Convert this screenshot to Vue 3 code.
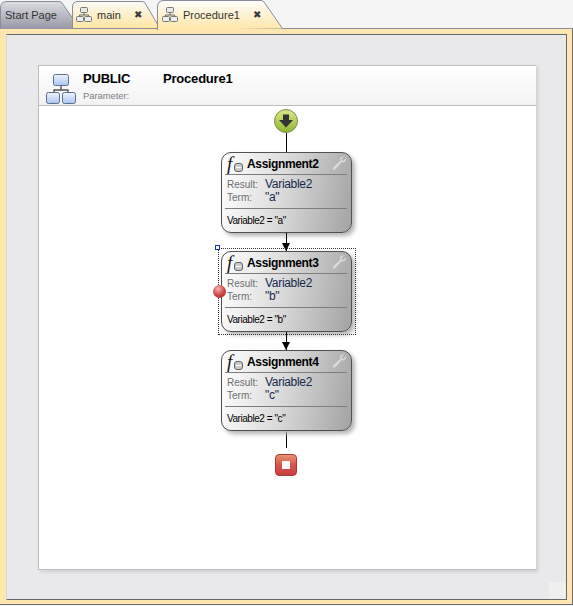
<script setup>
const cards = [
  { name: 'Assignment2', term: '"a"' },
  { name: 'Assignment3', term: '"b"', selected: true },
  { name: 'Assignment4', term: '"c"' },
]
</script>

<template>
  <div class="app">
    <div class="tabs">
      <div class="tab tab-start">
        <svg class="tab-bg" width="82" height="29" viewBox="0 0 82 29">
          <defs>
            <linearGradient id="gs" x1="0" y1="0" x2="0" y2="1">
              <stop offset="0" stop-color="#dcdce2" />
              <stop offset="1" stop-color="#9898a6" />
            </linearGradient>
          </defs>
          <path d="M0.5 29V8Q0.5 1.5 7 1.5H59Q61 1.5 62 3L80 28.5" fill="url(#gs)" stroke="#8a8d99" />
        </svg>
        <span class="tab-text">Start Page</span>
      </div>
      <div class="tab tab-main">
        <svg class="tab-bg" width="90" height="29" viewBox="0 0 90 29">
          <defs>
            <linearGradient id="gm" x1="0" y1="0" x2="0" y2="1">
              <stop offset="0" stop-color="#fbfaf5" />
              <stop offset="1" stop-color="#ffe5a0" />
            </linearGradient>
          </defs>
          <path d="M0.5 28.5V7Q0.5 1.5 6 1.5H70Q72 1.5 73 3L88 28.5Z" fill="url(#gm)" stroke="#8a8d99" />
        </svg>
        <svg class="net" width="16" height="15" viewBox="0 0 16 15">
          <rect x="4.5" y="0.5" width="7" height="5" rx="1" fill="#e8e8e8" stroke="#777" />
          <path d="M8 6V8M3.5 10V8H12.5V10" fill="none" stroke="#666" />
          <rect x="0.5" y="9.5" width="7" height="5" rx="1" fill="#eee" stroke="#777" />
          <rect x="8.5" y="9.5" width="7" height="5" rx="1" fill="#eee" stroke="#777" />
        </svg>
        <span class="tab-text tab-name">main</span>
        <span class="close">✖</span>
      </div>
      <div class="tab tab-proc">
        <svg class="tab-bg" width="126" height="30" viewBox="0 0 126 30">
          <defs>
            <linearGradient id="gp" x1="0" y1="0" x2="0" y2="1">
              <stop offset="0" stop-color="#fdfdfb" />
              <stop offset="1" stop-color="#ffe6a6" />
            </linearGradient>
          </defs>
          <path d="M0.5 30V7Q0.5 0.5 7 0.5H104Q106 0.5 107 2L125.5 28.5" fill="url(#gp)" stroke="#8a8d99" />
        </svg>
        <svg class="net" width="16" height="15" viewBox="0 0 16 15">
          <rect x="4.5" y="0.5" width="7" height="5" rx="1" fill="#e8e8e8" stroke="#777" />
          <path d="M8 6V8M3.5 10V8H12.5V10" fill="none" stroke="#666" />
          <rect x="0.5" y="9.5" width="7" height="5" rx="1" fill="#eee" stroke="#777" />
          <rect x="8.5" y="9.5" width="7" height="5" rx="1" fill="#eee" stroke="#777" />
        </svg>
        <span class="tab-text tab-name">Procedure1</span>
        <span class="close">✖</span>
      </div>
    </div>

    <div class="frame">
      <div class="inner">
        <div class="canvas">
          <div class="head">
            <svg class="head-icon" width="31" height="30" viewBox="0 0 31 30">
              <defs>
                <linearGradient id="gb" x1="0" y1="0" x2="0" y2="1">
                  <stop offset="0" stop-color="#eef4fd" />
                  <stop offset="1" stop-color="#a9c6f0" />
                </linearGradient>
              </defs>
              <rect x="7.5" y="0.5" width="15" height="11" rx="2" fill="url(#gb)" stroke="#5a6f8c" />
              <path d="M15 12V16M8 19V16H22V19" fill="none" stroke="#555" stroke-width="1.4" />
              <rect x="0.5" y="18.5" width="13" height="11" rx="2" fill="url(#gb)" stroke="#5a6f8c" />
              <rect x="16.5" y="18.5" width="13" height="11" rx="2" fill="url(#gb)" stroke="#5a6f8c" />
            </svg>
            <div class="head-text">
              <div class="head-title">
                <span class="scope">PUBLIC</span>
                <span>Procedure1</span>
              </div>
              <div class="param">Parameter:</div>
            </div>
          </div>

          <div class="flow">
            <svg class="flow-start" width="24" height="24" viewBox="0 0 24 24">
              <defs>
                <linearGradient id="gg" x1="0" y1="0" x2="0" y2="1">
                  <stop offset="0" stop-color="#dbe88a" />
                  <stop offset="1" stop-color="#8fb52e" />
                </linearGradient>
              </defs>
              <circle cx="12" cy="12" r="11.5" fill="url(#gg)" stroke="#7d8f50" />
              <path d="M9 5.5H15V11H19L12 18.5L5 11H9Z" fill="#333" />
            </svg>
            <div class="line first"></div>

            <template v-for="(c, i) in cards" :key="c.name">
              <div class="card">
                <div v-if="c.selected" class="selection"><span class="handle"></span></div>
                <span v-if="c.selected" class="breakpoint"></span>
                <div class="card-title">
                  <span class="fx">f</span>
                  <span class="fx-badge"><i></i></span>
                  <span class="card-name">{{ c.name }}</span>
                  <svg class="wrench" width="15" height="14" viewBox="0 0 16 16">
                    <path d="M15.5 2.2L12.6 5L10.8 4.8L10.7 3L13.5 0.4C11.4-0.3 9 0.6 8.6 2.8C8.4 3.8 8.6 4.7 8.9 5.4L0.9 12.6C0 13.5 0 14.6 0.7 15.3C1.4 16 2.5 16 3.3 15.2L10.5 7.1C11.4 7.5 12.6 7.5 13.6 7C15.3 6.2 16 4.1 15.5 2.2Z" fill="#dcdcdc" stroke="#b5b5b5" stroke-width="0.5" />
                  </svg>
                </div>
                <div class="fields">
                  <span class="label">Result:</span><span class="value">Variable2</span>
                  <span class="label">Term:</span><span class="value">{{ c.term }}</span>
                </div>
                <div class="summary">Variable2 = {{ c.term }}</div>
              </div>
              <div v-if="i < cards.length - 1" class="arrow"></div>
            </template>

            <div class="line last"></div>
            <div class="stop"><i></i></div>
          </div>
        </div>
        <div class="grip"></div>
      </div>
    </div>
  </div>
</template>

<style>
html, body { margin: 0; padding: 0; }
</style>

<style scoped>
.app {
  width: 573px;
  height: 606px;
  overflow: hidden;
  background: #f5f5f5;
  font-family: "Liberation Sans", Arial, sans-serif;
}
.tabs {
  display: flex;
  height: 28px;
  position: relative;
  z-index: 2;
}
.tab {
  position: relative;
  display: flex;
  align-items: center;
  height: 28px;
  box-sizing: border-box;
  font-size: 11px;
  color: #333;
}
.tab-bg { position: absolute; left: 0; top: 0; }
.tab-text, .net, .close { position: relative; }
.tab-start { width: 72px; padding: 1px 0 0 5px; z-index: 1; }
.tab-main { width: 85px; padding: 1px 0 0 4px; z-index: 2; }
.tab-proc { width: 126px; padding: 1px 0 0 5px; z-index: 3; }
.tab-name { margin-left: 5px; }
.close { font-size: 10px; color: #3a3a3a; margin-left: 13px; }
.frame {
  box-sizing: border-box;
  height: 577px;
  padding: 5px 5px 4px 6px;
  background: #ffe6ae;
  border-top: 1px solid #8a8d99;
  border-right: 1px solid #6b6e78;
  border-bottom: 1px solid #6b6e78;
}
.inner {
  position: relative;
  box-sizing: border-box;
  height: 566px;
  padding: 30px 30px 0 31px;
  background: #e9e9ec;
  border: 1px solid #65676e;
  border-left-color: #d8d8d8;
}
.canvas {
  box-sizing: border-box;
  width: 498px;
  height: 505px;
  background: #fff;
  border: 1px solid #bdbdbd;
  border-width: 1px 0 1px 1px;
  box-shadow: 2px 2px 3px #cfcfd2;
}
.head {
  display: flex;
  box-sizing: border-box;
  height: 40px;
  padding: 7px 0 0 7px;
  background: linear-gradient(#fff, #f3f3f3);
  border-bottom: 1px solid #bdbdbd;
}
.head-icon { flex: none; margin-top: 1px; }
.head-text { margin-left: 6px; }
.head-title {
  display: flex;
  font-size: 13px;
  font-weight: bold;
  color: #000;
  line-height: 11px;
  letter-spacing: -0.2px;
}
.scope { width: 80px; }
.param {
  margin-top: 6px;
  font-size: 9.5px;
  line-height: 11px;
  color: #7b7f88;
  letter-spacing: -0.1px;
}
.flow {
  display: flex;
  flex-direction: column;
  align-items: center;
  padding-right: 2px;
  padding-top: 3px;
}
.flow-start { display: block; flex: none; margin-right: 1px; }
.line { width: 1px; background: #000; }
.line.first { height: 19px; }
.line.last { height: 17px; }
.arrow {
  position: relative;
  width: 1px;
  height: 18px;
  background: #000;
}
.arrow::after {
  content: "";
  position: absolute;
  left: -4px;
  bottom: 0;
  border-style: solid;
  border-width: 8px 4.5px 0;
  border-color: #000 transparent transparent;
}
.card {
  position: relative;
  box-sizing: border-box;
  width: 131px;
  height: 81px;
  padding: 0 4px 0 3px;
  background: linear-gradient(100deg, #ffffff 0%, #dcdcdc 45%, #a3a3a3 100%);
  border: 1px solid #505050;
  border-radius: 10px;
  box-shadow: 3px 3px 4px #b5b5b5;
}
.selection {
  position: absolute;
  left: -4px;
  right: -5px;
  top: -4px;
  bottom: -4px;
  border: 1px dotted #333;
}
.handle {
  position: absolute;
  left: -4px;
  top: -4px;
  width: 3px;
  height: 3px;
  background: #fff;
  border: 1px solid #1c2fb8;
}
.breakpoint {
  position: absolute;
  left: -9px;
  top: 33px;
  width: 13px;
  height: 13px;
  border-radius: 50%;
  background: radial-gradient(circle at 40% 30%, #f3b4ad 0%, #c9433f 55%, #8f2a2a 100%);
  z-index: 2;
}
.card-title {
  position: relative;
  height: 21px;
  border-bottom: 1px solid #7d7d7d;
  display: flex;
  align-items: center;
}
.fx {
  position: absolute;
  left: 2px;
  top: 1px;
  font-family: "Liberation Serif", serif;
  font-style: italic;
  font-size: 19px;
  line-height: 19px;
  color: #111;
}
.fx-badge {
  position: absolute;
  left: 9px;
  top: 10px;
  width: 9px;
  height: 9px;
  box-sizing: border-box;
  border: 1px solid #666;
  border-radius: 3px;
  background: #c9c9c9;
}
.fx-badge i {
  position: absolute;
  left: 1px;
  right: 1px;
  top: 3px;
  height: 1px;
  background: #fff;
}
.card-name {
  margin-left: 22px;
  font-size: 12px;
  font-weight: bold;
  color: #000;
  letter-spacing: -0.35px;
}
.wrench { position: absolute; right: 0; top: 3px; }
.fields {
  display: grid;
  grid-template-columns: 38px 1fr;
  grid-auto-rows: 13px;
  align-items: center;
  height: 34px;
  box-sizing: border-box;
  padding: 3px 0 0 2px;
  border-bottom: 1px solid #7d7d7d;
}
.label { font-size: 10px; line-height: 13px; color: #6e6e6e; }
.value { font-size: 12px; line-height: 13px; color: #16294d; letter-spacing: -0.3px; }
.summary {
  padding: 6px 0 0 2px;
  font-size: 10px;
  line-height: 11px;
  color: #000;
  letter-spacing: -0.45px;
}
.stop {
  position: relative;
  box-sizing: border-box;
  width: 22px;
  height: 22px;
  margin-top: 6px;
  margin-right: 1px;
  border: 1px solid #a83a3a;
  border-radius: 4px;
  background: linear-gradient(#e8946e 0%, #d9534f 50%, #c93f3f 100%);
  display: flex;
  align-items: center;
  justify-content: center;
}
.stop i {
  width: 8px;
  height: 8px;
  background: #fff;
}
.grip {
  position: absolute;
  right: 0;
  bottom: 0;
  width: 17px;
  height: 17px;
  background: #efeff0;
}
</style>
